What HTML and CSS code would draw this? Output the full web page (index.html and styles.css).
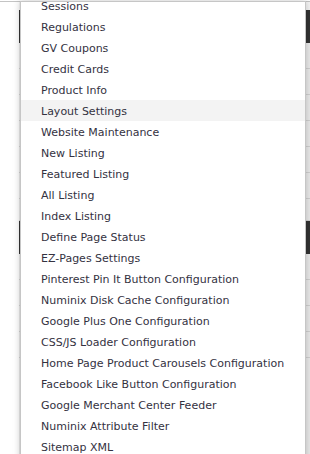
FILE: index.html
```html
<!DOCTYPE html>
<html>
<head>
<meta charset="utf-8">
<link rel="stylesheet" href="styles.css">
</head>
<body>
<div class="page">
  <div class="topline"></div>
  <div class="content">
    <div class="gap"></div>
    <div class="row dark"></div>
    <div class="row"></div>
    <div class="row"></div>
    <div class="row"></div>
    <div class="row"></div>
    <div class="row"></div>
    <div class="row"></div>
    <div class="row short"></div>
    <div class="row dark"></div>
    <div class="row"></div>
    <div class="row"></div>
    <div class="row"></div>
    <div class="row"></div>
    <div class="rest"></div>
  </div>
</div>
<div class="menu">
  <ul class="list">
    <li>Sessions</li>
    <li>Regulations</li>
    <li>GV Coupons</li>
    <li>Credit Cards</li>
    <li>Product Info</li>
    <li class="active">Layout Settings</li>
    <li>Website Maintenance</li>
    <li>New Listing</li>
    <li>Featured Listing</li>
    <li>All Listing</li>
    <li>Index Listing</li>
    <li>Define Page Status</li>
    <li>EZ-Pages Settings</li>
    <li>Pinterest Pin It Button Configuration</li>
    <li>Numinix Disk Cache Configuration</li>
    <li>Google Plus One Configuration</li>
    <li>CSS/JS Loader Configuration</li>
    <li>Home Page Product Carousels Configuration</li>
    <li>Facebook Like Button Configuration</li>
    <li>Google Merchant Center Feeder</li>
    <li>Numinix Attribute Filter</li>
    <li>Sitemap XML</li>
    <li>Google Analytics</li>
  </ul>
</div>
</body>
</html>
```
FILE: styles.css
```css
html, body {
  margin: 0;
  padding: 0;
  height: 100%;
  overflow: hidden;
  background: #ffffff;
}
.page {
  display: flex;
  flex-direction: column;
}
.topline {
  height: 1px;
  margin-top: 1px;
  background: #c4c4c4;
}
.content {
  margin-left: 19px;
  display: flex;
  flex-direction: column;
  background: #e9e9e9;
}
.gap {
  height: 8px;
  background: #f4f4f4;
}
.row {
  height: 25px;
  border-bottom: 1px solid #cfcfcf;
}
.row.short {
  height: 21px;
}
.row.dark {
  height: 33px;
  border-bottom: none;
  background: #333333;
}
.rest {
  height: 200px;
}
.menu {
  position: absolute;
  left: 20px;
  top: 1px;
  width: 284px;
  height: 470px;
  overflow: hidden;
  background: #ffffff;
  border: 1px solid #c6c6c6;
  box-shadow: 0 0 7px rgba(0, 0, 0, 0.22);
}
.list {
  list-style: none;
  margin: -7px 0 0 0;
  padding: 0;
  font-family: "DejaVu Sans", Verdana, sans-serif;
  font-size: 11px;
  color: #34323f;
}
.list li {
  height: 21px;
  line-height: 23px;
  padding-left: 20px;
  white-space: nowrap;
}
.list li.active {
  background: #f3f3f3;
}
```
